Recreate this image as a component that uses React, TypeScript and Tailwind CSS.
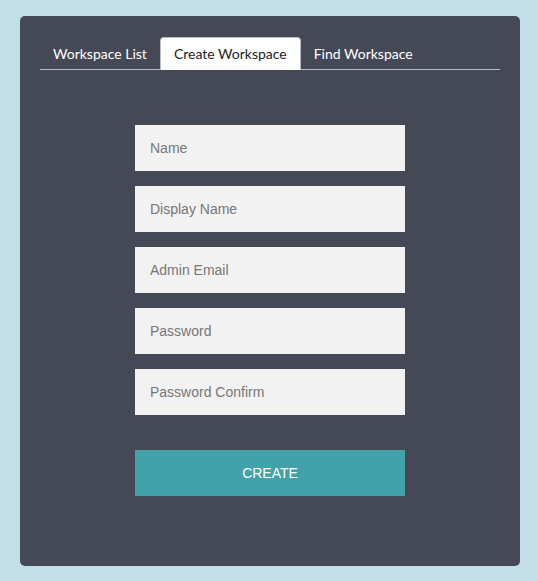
const fields = ["Name", "Display Name", "Admin Email", "Password", "Password Confirm"];

const tabs = ["Workspace List", "Create Workspace", "Find Workspace"];

export default function App() {
  return (
    <div className="min-h-[581px] w-full bg-[#c2dfe9] pl-5 pr-[18px] pt-4 pb-[15px]">
      <div className="rounded-[5px] bg-[#444955] px-5 pt-[21px] pb-[70px]">
        {/* tabs */}
        <div className="flex border-b border-[#b8bcc4] font-['Lato','Open_Sans',sans-serif] text-[14px]">
          {tabs.map((t) => (
            <div
              key={t}
              className={
                t === "Create Workspace"
                  ? "-mb-px h-[33px] rounded-t-[4px] border border-b-0 border-[#b8bcc4] bg-white px-[13px] leading-[31px] text-[#222]"
                  : "h-[32px] px-[13px] pt-px leading-[31px] text-white"
              }
            >
              {t}
            </div>
          ))}
        </div>

        <form className="mx-auto mt-[55px] flex w-[270px] flex-col gap-[15px] font-['Liberation_Sans',Arial,sans-serif] text-[14px]">
          {fields.map((f) => (
            <input
              key={f}
              type={f.startsWith("Password") ? "password" : "text"}
              placeholder={f}
              className="h-[46px] w-full bg-[#f2f2f2] px-[15px] text-[#333] outline-none placeholder:text-[#777]"
            />
          ))}
          <button
            type="button"
            className="mt-5 h-[46px] w-full bg-[#42a2a9] text-[14px] text-white"
          >
            CREATE
          </button>
        </form>
      </div>
    </div>
  );
}
